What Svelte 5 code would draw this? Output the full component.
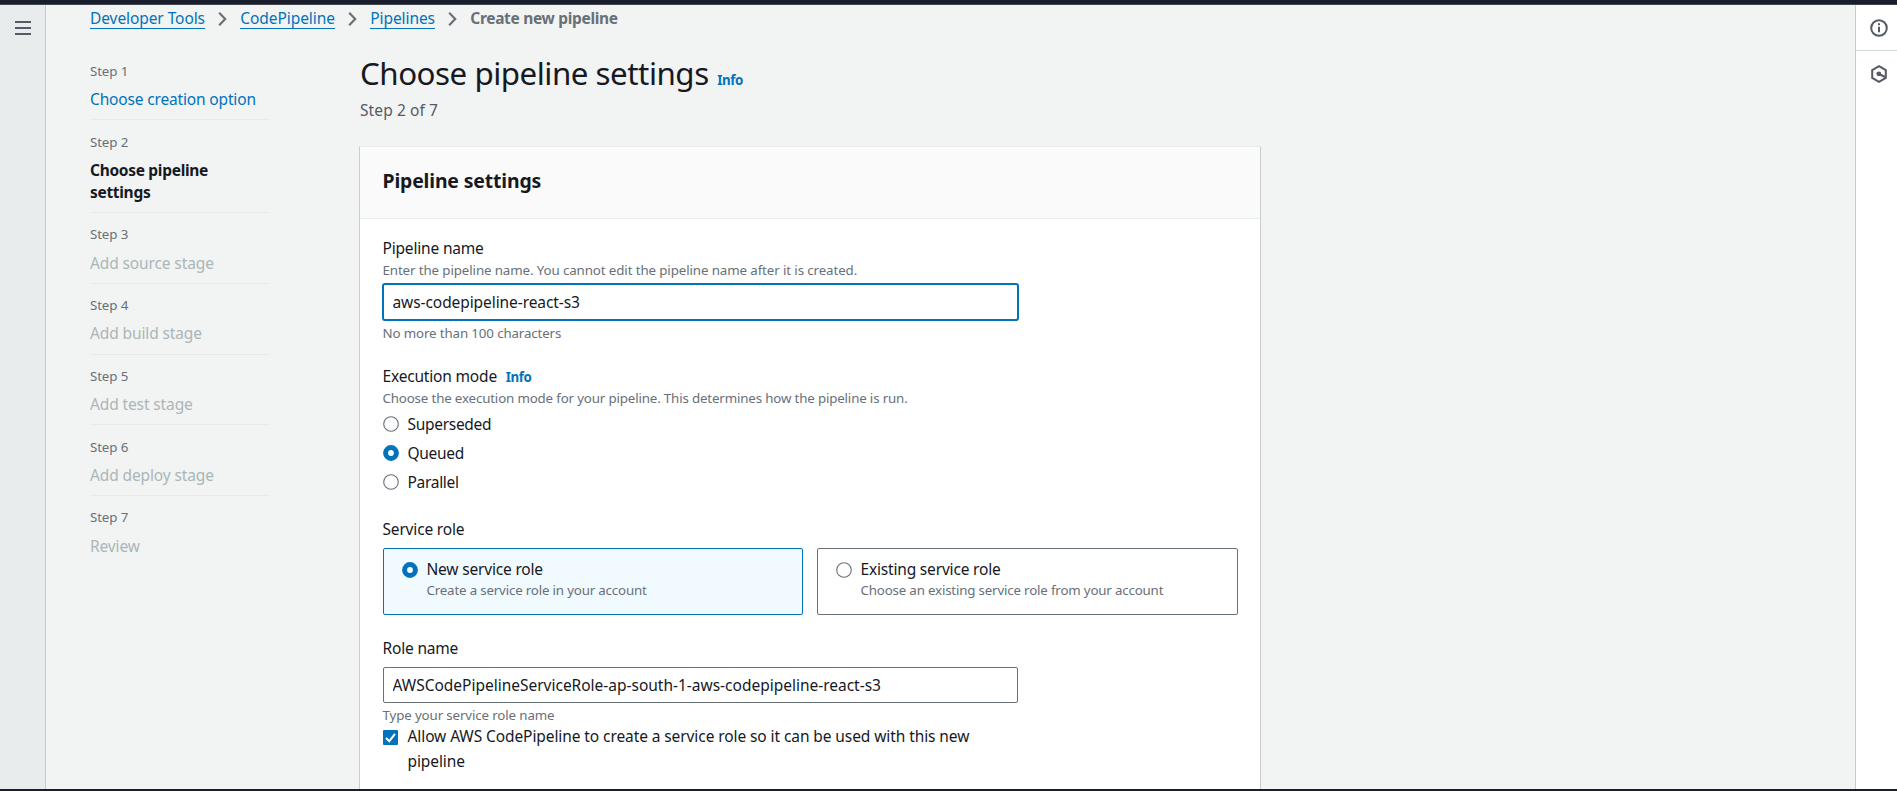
<script>
  const crumbs = ['Developer Tools', 'CodePipeline', 'Pipelines'];
  const steps = [
    { title: 'Choose creation option', state: 'done' },
    { title: 'Choose pipeline settings', state: 'current' },
    { title: 'Add source stage', state: 'todo' },
    { title: 'Add build stage', state: 'todo' },
    { title: 'Add test stage', state: 'todo' },
    { title: 'Add deploy stage', state: 'todo' },
    { title: 'Review', state: 'todo' },
  ];
  const modes = ['Superseded', 'Queued', 'Parallel'];
  const roles = [
    { title: 'New service role', text: 'Create a service role in your account' },
    { title: 'Existing service role', text: 'Choose an existing service role from your account' },
  ];
  let mode = $state('Queued');
  let role = $state('New service role');
  let pipelineName = $state('aws-codepipeline-react-s3');
  let roleName = $state('AWSCodePipelineServiceRole-ap-south-1-aws-codepipeline-react-s3');
</script>

{#snippet radio(on)}
  <svg class="radio" width="16" height="16" viewBox="0 0 16 16">
    {#if on}
      <circle cx="8" cy="8" r="5.4" fill="#fff" stroke="#0073bb" stroke-width="5" />
    {:else}
      <circle cx="8" cy="8" r="7.3" fill="#fff" stroke="#687078" stroke-width="1.1" />
    {/if}
  </svg>
{/snippet}

<div class="page">
  <div class="topbar"></div>
  <div class="shell">
    <aside class="rail">
      <svg width="16" height="16" viewBox="0 0 16 16" stroke="#545b64" stroke-width="2">
        <path d="M0 2h16M0 8h16M0 14h16" />
      </svg>
    </aside>

    <main>
      <nav class="crumbs">
        {#each crumbs as c}
          <a href="#top">{c}</a>
          <svg width="9" height="14" viewBox="0 0 9 14" fill="none" stroke="#687078" stroke-width="2.2">
            <path d="M1.2 .8l6 6.2-6 6.2" />
          </svg>
        {/each}
        <strong>Create new pipeline</strong>
      </nav>

      <div class="columns">
        <ol class="steps">
          {#each steps as s, i}
            <li class={s.state}>
              <small>Step {i + 1}</small>
              <span>{s.title}</span>
            </li>
          {/each}
        </ol>

        <div class="content">
          <div class="title">
            <h1>Choose pipeline settings</h1>
            <a class="info" href="#info">Info</a>
          </div>
          <p class="progress">Step 2 of 7</p>

          <section class="card">
            <header><h2>Pipeline settings</h2></header>
            <div class="body">
              <div class="field">
                <div class="label">Pipeline name</div>
                <div class="hint enter">Enter the pipeline name. You cannot edit the pipeline name after it is created.</div>
                <input class="focused" type="text" bind:value={pipelineName} />
                <div class="note">No more than 100 characters</div>
              </div>

              <div class="field exec">
                <div class="label">Execution mode <a class="info" href="#info">Info</a></div>
                <div class="hint">Choose the execution mode for your pipeline. This determines how the pipeline is run.</div>
                <div class="modes">
                  {#each modes as m}
                    <button class="option" onclick={() => (mode = m)}>{@render radio(mode === m)}<span>{m}</span></button>
                  {/each}
                </div>
              </div>

              <div class="field service">
                <div class="label">Service role</div>
                <div class="tiles">
                  {#each roles as r}
                    <button class="tile" class:selected={role === r.title} onclick={() => (role = r.title)}>
                      {@render radio(role === r.title)}
                      <span class="tiletext">
                        <span>{r.title}</span>
                        <span class="desc">{r.text}</span>
                      </span>
                    </button>
                  {/each}
                </div>
              </div>

              <div class="field role">
                <div class="label">Role name</div>
                <input type="text" bind:value={roleName} />
                <div class="note">Type your service role name</div>
                <div class="check">
                  <svg width="15" height="15" viewBox="0 0 15 15">
                    <rect width="15" height="15" rx="1" fill="#0073bb" />
                    <path d="M3 8l3.3 3.2L12 3.8" fill="none" stroke="#fff" stroke-width="2" />
                  </svg>
                  <span>Allow AWS CodePipeline to create a service role so it can be used with this new pipeline</span>
                </div>
              </div>
            </div>
          </section>
        </div>
      </div>
    </main>

    <aside class="tools">
      <div class="tool">
        <svg width="18" height="18" viewBox="0 0 18 18" fill="none" stroke="#545b64" stroke-width="2">
          <circle cx="9" cy="9" r="7.8" />
          <path d="M9 4.3v2M9 7.8v5.4" />
        </svg>
      </div>
      <div class="tool">
        <svg width="18" height="18" viewBox="0 0 18 18" fill="none" stroke="#545b64" stroke-width="2">
          <path d="M9 1.2l6.8 3.9v7.8L9 16.8l-6.8-3.9V5.1z" />
          <path d="M9 9l6 3" />
          <circle cx="8.8" cy="8.8" r="2.4" fill="#545b64" stroke="none" />
        </svg>
      </div>
    </aside>
  </div>
  <div class="bottombar"></div>
</div>

<style>
  :global(body) {
    margin: 0;
    overflow: hidden;
  }
  .page {
    display: flex;
    flex-direction: column;
    height: 791px;
    overflow: hidden;
    background: #f2f3f3;
    color: #16191f;
    font: 15.5px/20px 'Noto Sans', 'Open Sans', sans-serif;
    letter-spacing: -0.12px;
  }
  a {
    color: #0073bb;
    text-decoration: none;
  }
  svg {
    display: block;
    flex: none;
  }
  .topbar {
    flex: none;
    height: 4px;
    background: #1a1d2b;
    border-bottom: 1px solid #414750;
  }
  .bottombar {
    flex: none;
    height: 2px;
    background: #1a1d2b;
  }
  .shell {
    display: flex;
    flex: 1;
    min-height: 0;
  }
  .rail {
    box-sizing: border-box;
    width: 46px;
    padding: 15px 0 0 15px;
    background: #e9ecec;
    border-right: 1px solid #c4caca;
  }
  .tools {
    width: 41px;
    background: #fff;
    border-left: 1px solid #c4caca;
  }
  .tool {
    display: flex;
    justify-content: center;
    align-items: center;
    height: 45px;
    padding-left: 5px;
    border-bottom: 1px solid #d0d8d8;
  }
  .tool + .tool {
    border: 0;
    height: 46px;
  }
  main {
    flex: 1;
    min-width: 0;
    padding: 3px 0 0 44px;
  }
  .crumbs {
    display: flex;
    height: 21px;
  }
  .crumbs a {
    border-bottom: 1px solid #0073bb;
    letter-spacing: -0.08px;
  }
  .crumbs svg {
    margin: 4px 13px 0 13.4px;
  }
  .crumbs strong {
    color: #687078;
    letter-spacing: -0.32px;
  }
  .columns {
    display: flex;
    gap: 89px;
  }
  .steps {
    width: 180px;
    margin: 32.6px 0 0;
    padding: 0;
    list-style: none;
  }
  .steps li {
    display: flex;
    flex-direction: column;
    padding: 12.2px 0 9.6px;
    border-top: 1px solid #e7eaea;
    line-height: 22px;
  }
  .steps li:first-child {
    padding: 0 0 9.6px;
    border: 0;
  }
  .steps small {
    margin-bottom: 8.2px;
    font-size: 13.3px;
    line-height: 18px;
    color: #687078;
  }
  .steps li:not(:first-child) {
    padding-bottom: 9.4px;
  }
  .done span {
    color: #0073bb;
    letter-spacing: -0.16px;
  }
  .current span {
    width: 150px;
    font-weight: 700;
    letter-spacing: -0.3px;
  }
  .todo span {
    color: #aab7b8;
    letter-spacing: -0.12px;
  }
  .content {
    width: 902px;
    padding-top: 24px;
  }
  .title {
    display: flex;
    align-items: baseline;
    gap: 8.6px;
    padding-left: 1px;
  }
  h1 {
    margin: 0;
    font-size: 31.3px;
    line-height: 40px;
    font-weight: 400;
    letter-spacing: -0.48px;
  }
  .info {
    font-size: 13.3px;
    font-weight: 700;
    letter-spacing: -0.4px;
  }
  .progress {
    margin: 7px 0 26px 1px;
    color: #545b64;
    letter-spacing: 0.1px;
  }
  .card {
    box-sizing: border-box;
    height: 700px;
    background: #fff;
    border: 1px solid #c8cccc;
    border-top-color: #eaeded;
  }
  .card header {
    height: 71px;
    padding-left: 22.5px;
    background: #fafafa;
    border-bottom: 1px solid #eaeded;
  }
  h2 {
    margin: 0;
    padding-top: 20px;
    font-size: 19.4px;
    line-height: 28px;
    font-weight: 700;
    letter-spacing: -0.14px;
  }
  .body {
    padding: 19px 22px 0 23px;
  }
  .label {
    margin-left: -0.5px;
    letter-spacing: -0.18px;
  }
  .hint,
  .note,
  .desc {
    color: #687078;
    font-size: 13.3px;
    line-height: 18px;
    letter-spacing: -0.15px;
  }
  .hint,
  .note {
    margin-left: -0.5px;
  }
  .hint {
    margin-top: 2px;
  }
  .hint.enter {
    margin-top: 3px;
    letter-spacing: -0.1px;
  }
  .note {
    margin-top: 3px;
    letter-spacing: -0.12px;
  }
  .exec {
    margin-top: 24px;
  }
  .exec .info {
    margin-left: 5px;
  }
  input {
    display: block;
    box-sizing: border-box;
    width: 635px;
    height: 36px;
    margin: 0;
    padding: 0 8.5px 1px;
    border: 1px solid #687078;
    border-radius: 2px;
    background: #fff;
    color: #16191f;
    font: inherit;
    letter-spacing: -0.01px;
    outline: none;
  }
  input.focused {
    width: 637px;
    height: 38px;
    margin: 4px -1px 0;
    padding-bottom: 0;
    border: 2px solid #0073bb;
    border-radius: 3px;
    letter-spacing: -0.08px;
  }
  button {
    padding: 0;
    border: 0;
    background: none;
    color: inherit;
    font: inherit;
    letter-spacing: inherit;
    text-align: left;
  }
  .modes {
    display: flex;
    flex-direction: column;
    gap: 9px;
    margin-top: 7px;
  }
  .option {
    display: flex;
    align-items: center;
    gap: 8.5px;
    letter-spacing: -0.3px;
  }
  .service {
    margin-top: 27px;
  }
  .tiles {
    display: grid;
    grid-template-columns: 420px 421px;
    gap: 14px;
    margin-top: 9px;
  }
  .tile {
    display: flex;
    gap: 8.5px;
    box-sizing: border-box;
    height: 67px;
    padding: 10px 0 0 18px;
    border: 1px solid #687078;
    border-radius: 2px;
    letter-spacing: -0.18px;
  }
  .tile .radio {
    margin-top: 3px;
  }
  .tile.selected {
    border-color: #0073bb;
    background: #f1faff;
  }
  .tiletext {
    display: flex;
    flex-direction: column;
    gap: 2px;
  }
  .desc {
    letter-spacing: -0.17px;
  }
  .role {
    margin-top: 23px;
  }
  .role input {
    margin-top: 9px;
  }
  .role .note {
    margin-top: 3px;
  }
  .check {
    display: flex;
    gap: 9.5px;
    width: 610px;
    line-height: 25px;
    letter-spacing: -0.09px;
  }
  .check svg {
    margin-top: 6px;
  }
</style>
